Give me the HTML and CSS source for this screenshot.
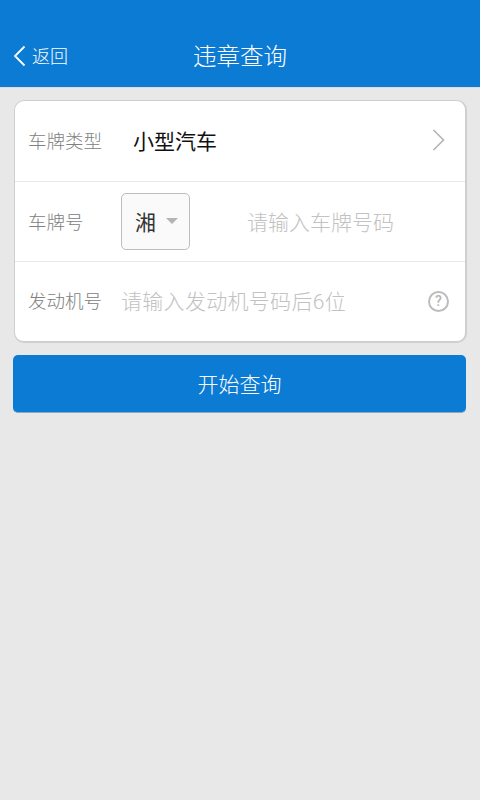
FILE: index.html
```html
<!DOCTYPE html>
<html lang="zh-CN">
<head>
    <meta charset="UTF-8">
    <meta name="viewport" content="width=device-width, initial-scale=1.0">
    <title>违章查询</title>
    <link rel="stylesheet" href="styles.css">
</head>
<body>
    <header class="topbar">
        <div class="back">
            <svg class="back-icon" width="13" height="22" viewBox="0 0 13 22"><path d="M11.5 1.5 L2 11 L11.5 20.5" fill="none" stroke="#fff" stroke-width="1.8"/></svg>
            <span>返回</span>
        </div>
        <div class="title">违章查询</div>
    </header>
    <div class="card">
        <div class="row">
            <span class="label">车牌类型</span>
            <span class="value">小型汽车</span>
            <svg class="arrow" width="13" height="22" viewBox="0 0 13 22"><path d="M1.5 1 L11.5 11 L1.5 21" fill="none" stroke="#b4b4b4" stroke-width="1.6"/></svg>
        </div>
        <div class="row">
            <span class="label">车牌号</span>
            <div class="province">
                <span>湘</span>
                <i class="caret"></i>
            </div>
            <span class="hint plate-hint">请输入车牌号码</span>
        </div>
        <div class="row engine-row">
            <span class="label">发动机号</span>
            <span class="hint engine-hint">请输入发动机号码后6位</span>
            <span class="help">?</span>
        </div>
    </div>
    <button class="btn">开始查询</button>
</body>
</html>
```

FILE: styles.css
```css
body {
    margin: 0;
    padding: 0;
    height: 800px;
    overflow: hidden;
    background-color: #e8e8e8;
    font-family: "Roboto", "Noto Sans CJK SC", sans-serif;
    font-weight: 300;
}
.topbar {
    position: relative;
    height: 64px;
    padding-top: 23px;
    background-color: #0b7bd3;
    color: #fff;
    border-bottom: 1px solid #dcdcdc;
    display: flex;
    align-items: center;
    justify-content: center;
}
.back {
    position: absolute;
    left: 13px;
    top: 45px;
    display: flex;
    align-items: center;
    gap: 6px;
    font-size: 18px;
    line-height: 22px;
}
.back span {
    position: relative;
    top: 1px;
}
.back-icon {
    display: block;
}
.title {
    font-size: 23.5px;
}
.card {
    margin: 12px 13px 0 14px;
    background-color: #fff;
    border: 1px solid #cfcfcf;
    border-right-width: 2px;
    border-bottom-width: 2px;
    border-radius: 10px;
}
.row {
    display: flex;
    align-items: center;
    box-sizing: border-box;
    height: 80px;
    padding: 0 16px 2px 13px;
    border-top: 1px solid #e8e8e8;
}
.row:first-child {
    border-top: none;
}
.engine-row {
    padding-bottom: 4px;
}
.label {
    width: 93px;
    flex: none;
    font-size: 18.5px;
    color: #808080;
}
.value {
    flex: 1;
    padding-left: 12px;
    font-size: 21px;
    font-weight: 400;
    color: #111;
}
.arrow {
    margin-right: 4px;
}
.province {
    display: flex;
    align-items: center;
    box-sizing: border-box;
    width: 69px;
    height: 57px;
    margin-top: 2px;
    padding: 0 0 2px 13px;
    background-color: #fafafa;
    border: 1px solid #bdbdbd;
    border-radius: 5px;
    font-size: 21px;
    font-weight: 400;
    color: #333;
}
.caret {
    margin-left: 10px;
    border-left: 6px solid transparent;
    border-right: 6px solid transparent;
    border-top: 6px solid #b4b4b4;
}
.hint {
    flex: 1;
    font-size: 21px;
    color: #c2c2c2;
}
.plate-hint {
    padding-left: 57px;
}
.engine-hint {
    letter-spacing: 0.3px;
}
.help {
    box-sizing: border-box;
    width: 21px;
    height: 21px;
    margin-top: 4px;
    border: 2px solid #bcbcbc;
    border-radius: 50%;
    text-align: center;
    line-height: 17px;
    font-size: 14px;
    font-weight: 500;
    color: #b4b4b4;
}
.btn {
    display: block;
    box-sizing: border-box;
    width: 453px;
    height: 58px;
    margin: 12px 0 0 13px;
    padding: 0 0 2px;
    background-color: #0b7bd3;
    border: none;
    border-bottom: 1px solid #8ea9bf;
    border-radius: 5px;
    color: #fff;
    font-family: inherit;
    font-weight: 300;
    font-size: 21px;
}
```
